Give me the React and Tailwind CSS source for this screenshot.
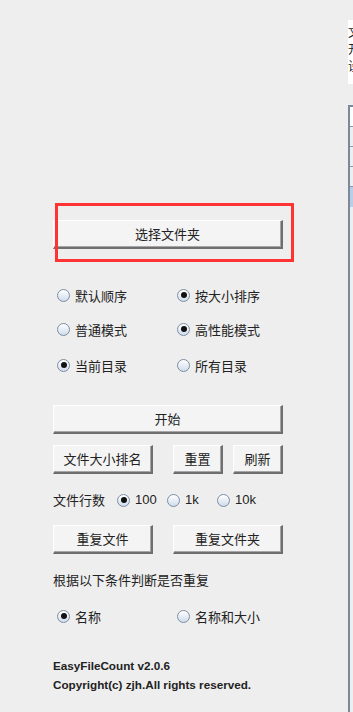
import React from 'react'

const cjk = { fontFamily: '"Noto Sans CJK SC", "Liberation Sans", sans-serif' }

function Radio({ checked }) {
  return (
    <span className="relative inline-flex h-[13px] w-[13px] shrink-0 items-center justify-center rounded-full border border-[#7d8ea3] bg-gradient-to-b from-white to-[#cfdcec]">
      {checked && <span className="h-[6px] w-[6px] rounded-full bg-[#111]" />}
    </span>
  )
}

function RadioItem({ checked, label, className = '' }) {
  return (
    <div className={`flex items-center gap-[5px] ${className}`}>
      <Radio checked={checked} />
      <span className="text-[13px] leading-none text-[#222]">{label}</span>
    </div>
  )
}

function Btn({ children, className = '' }) {
  return (
    <button
      className={`flex h-[29px] items-center justify-center border-t border-l border-b-2 border-r-2 border-t-white border-l-white border-b-[#6e6e6e] border-r-[#6e6e6e] bg-[#f4f4f4] text-[13px] text-[#222] shadow-[inset_-1px_-1px_0_#a6a6a6] ${className}`}
    >
      {children}
    </button>
  )
}

export default function App() {
  const options = [
    [
      { label: '默认顺序', checked: false },
      { label: '按大小排序', checked: true },
    ],
    [
      { label: '普通模式', checked: false },
      { label: '高性能模式', checked: true },
    ],
    [
      { label: '当前目录', checked: true },
      { label: '所有目录', checked: false },
    ],
  ]

  return (
    <div className="flex h-[712px] w-[353px] overflow-hidden bg-[#eeeeee]" style={cjk}>
      {/* left controls */}
      <div className="relative flex w-[348px] shrink-0 flex-col pl-[53px]">
        <Btn className="mt-[220px] w-[230px]">选择文件夹</Btn>
        <div className="pointer-events-none absolute left-[55px] top-[203px] h-[59px] w-[239px] border-[3px] border-[#ff3333]" />

        <div className="mt-[36px] flex flex-col">
          {options.map((row, i) => (
            <div
              key={i}
              className={`grid h-[20px] grid-cols-[120px_120px] items-center ${i === 1 ? 'mt-[14px]' : ''} ${i === 2 ? 'mt-[16px]' : ''}`}
            >
              {row.map((o) => (
                <RadioItem key={o.label} label={o.label} checked={o.checked} className="pl-[4px]" />
              ))}
            </div>
          ))}
        </div>

        <Btn className="mt-[30px] w-[230px]">开始</Btn>
        <div className="mt-[11px] flex gap-[20px]">
          <Btn className="w-[100px]">文件大小排名</Btn>
          <Btn className="w-[50px]">重置</Btn>
          <Btn className="-ml-[10px] w-[50px]">刷新</Btn>
        </div>

        <div className="mt-[16px] flex h-[20px] items-center">
          <span className="w-[64px] text-[13px] text-[#222]">文件行数</span>
          {[
            { label: '100', checked: true },
            { label: '1k', checked: false },
            { label: '10k', checked: false },
          ].map((o) => (
            <div key={o.label} className="flex w-[50px] items-center gap-[5px]">
              <Radio checked={o.checked} />
              <span className="text-[13px] text-[#222]" style={{ fontFamily: '"Liberation Sans", sans-serif' }}>
                {o.label}
              </span>
            </div>
          ))}
        </div>

        <div className="mt-[15px] flex gap-[20px]">
          <Btn className="w-[100px]">重复文件</Btn>
          <Btn className="w-[110px]">重复文件夹</Btn>
        </div>

        <div className="mt-[16px] flex h-[20px] items-center text-[13px] text-[#222]">根据以下条件判断是否重复</div>

        <div className="mt-[16px] grid h-[20px] grid-cols-[120px_120px] items-center">
          <RadioItem label="名称" checked className="pl-[4px]" />
          <RadioItem label="名称和大小" checked={false} className="pl-[4px]" />
        </div>

        <div
          className="mt-[30px] text-[11.7px] font-bold leading-[19px] text-[#222]"
          style={{ fontFamily: '"Liberation Sans", Arial, sans-serif' }}
        >
          <div>EasyFileCount v2.0.6</div>
          <div>Copyright(c) zjh.All rights reserved.</div>
        </div>
      </div>

      {/* right side: cut-off text area and table */}
      <div className="flex min-w-0 flex-1 flex-col overflow-hidden">
        <div className="mt-[20px] h-[64px] bg-white pt-[3px] text-[12px] leading-[17px] text-[#222] whitespace-nowrap">
          <div>文件统计</div>
          <div>开始</div>
          <div>设置</div>
        </div>
        <div className="mt-[21px] flex flex-1 flex-col border-l-2 border-t-2 border-[#7a8a9c]">
          <div className="h-[20px] border-b border-[#8a9aac] bg-white" />
          <div className="h-[20px] border-b border-[#8a9aac]" />
          <div className="h-[20px] border-b border-[#8a9aac]" />
          <div className="h-[20px] border-b border-[#8a9aac]" />
          <div className="h-[20px] bg-[#b8cfe6]" />
        </div>
      </div>
    </div>
  )
}
